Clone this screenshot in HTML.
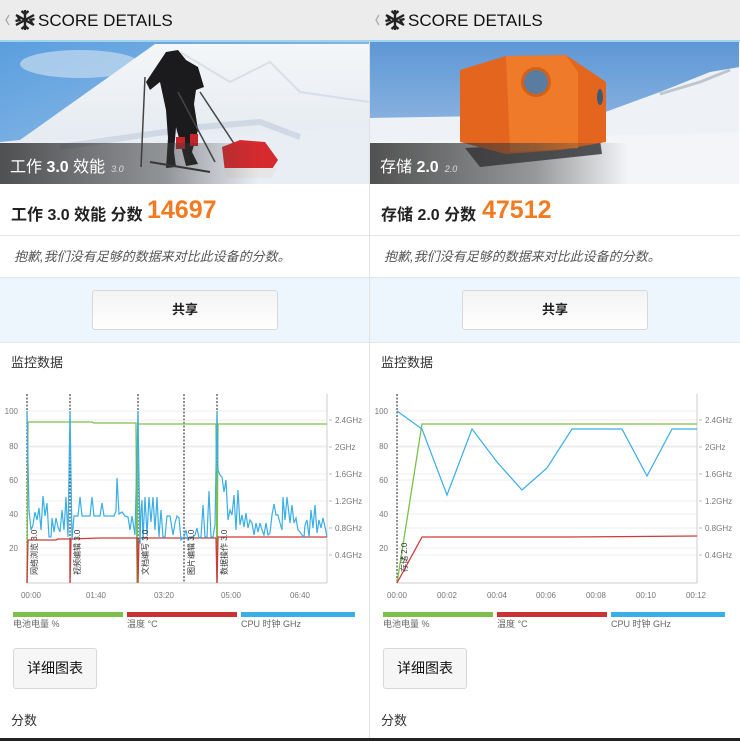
<!DOCTYPE html>
<html><head><meta charset="utf-8"><style>
*{margin:0;padding:0;box-sizing:border-box}
body{width:740px;height:741px;background:#fff;font-family:"Liberation Sans","Noto Sans CJK SC",sans-serif;position:relative;overflow:hidden}
.col{position:absolute;top:0;width:370px;height:741px;background:#fff}
.hdr{position:absolute;top:0;left:0;width:370px;height:41px;background:#ececec}
.hdr span{position:absolute;left:38px;top:11px;font-size:17px;color:#111}
.hline{position:absolute;top:40px;left:0;width:370px;height:2px;background:#9fd3ee}
.img{position:absolute;top:42px;left:0;width:369px;height:142px;overflow:hidden}
.ov{position:absolute;left:0;top:101px;width:369px;height:41px;background:linear-gradient(90deg,rgba(40,40,40,.8),rgba(60,60,60,.5) 45%,rgba(80,80,80,0) 70%)}
.ovt{position:absolute;left:10px;top:111px;color:#fff;font-size:16px}
.ovt small{font-size:9px;font-style:italic;margin-left:6px;color:#ddd}
.score{position:absolute;top:201px;left:11px;font-size:16px;font-weight:bold;color:#222}
.num{position:absolute;top:196px;left:147px;font-size:25px;font-weight:bold;color:#f47a20}
.l1{position:absolute;top:235px;left:0;width:370px;height:1px;background:#e4e4e4}
.sorry{position:absolute;top:246px;left:14px;font-size:13px;font-style:italic;color:#555}
.band{position:absolute;top:277px;left:0;width:370px;height:66px;background:#eef6fd;border-top:1px solid #dfe6ec;border-bottom:1px solid #dfe6ec}
.btn{position:absolute;top:290px;left:92px;width:186px;height:40px;border:1px solid #d8d8d8;border-radius:3px;background:linear-gradient(#f3f3f3,#fff);text-align:center;line-height:38px;font-size:13px;font-weight:bold;color:#222}
.mon{position:absolute;top:352px;left:11px;font-size:13px;color:#333}
.lg{position:absolute;top:612px;height:5px}
.lgt{position:absolute;top:617px;font-size:9px;color:#666}
.btn2{position:absolute;top:648px;left:13px;width:84px;height:41px;border:1px solid #d8d8d8;border-radius:3px;background:#f6f6f6;text-align:center;line-height:39px;font-size:14px;color:#111}
.fs{position:absolute;top:710px;left:11px;font-size:13px;color:#333}
.vsep{position:absolute;top:42px;left:369px;width:1px;height:699px;background:#e2e2e2}
.ax{font-family:"Liberation Sans",sans-serif;font-size:8px;fill:#777}
</style></head><body>

<!-- LEFT -->
<div class="col" style="left:0">
 <div class="hdr"><svg style="position:absolute;left:3px;top:9px" width="34" height="22" viewBox="0 0 34 22"><path d="M6 6 L3 11 L6 16" stroke="#aaa" stroke-width="1.3" fill="none"/><g stroke="#222" stroke-width="2.4" fill="none" transform="translate(22 11)"><path d="M0-10V10M-9-5L9 5M-9 5L9-5"/><path d="M-3.5-9L0-6L3.5-9M-3.5 9L0 6L3.5 9M-9.5 1L-5.5 0L-7.5-4.5M9.5-1L5.5 0L7.5 4.5"/></g></svg><span>SCORE DETAILS</span></div>
 <div class="hline"></div>
 <div class="img">
  <svg width="369" height="142">
   <defs><linearGradient id="sk" x1="0" y1="0" x2="1" y2="1"><stop offset="0" stop-color="#5a9ede"/><stop offset="1" stop-color="#a9cbea"/></linearGradient>
   <linearGradient id="sn" x1="0" y1="0" x2="0" y2="1"><stop offset="0" stop-color="#f4f6f8"/><stop offset="1" stop-color="#dfe6ee"/></linearGradient></defs>
   <rect width="369" height="142" fill="url(#sk)"/>
   <ellipse cx="80" cy="22" rx="60" ry="14" fill="#c6dcef" opacity=".7"/>
   <path d="M20 98 L155 2 L369 2 L369 142 L0 142 L0 100Z" fill="url(#sn)"/>
   <path d="M180 10 L230 40 L270 20 L300 50 L369 60" stroke="#c9d2db" stroke-width="2" fill="none" opacity=".6"/>
   <path d="M0 100 L369 85 L369 142 L0 142Z" fill="#e9eef5"/>
   <path d="M60 105 L200 85 L260 80 L300 95" stroke="#b7c4d6" stroke-width="6" fill="none" opacity=".5"/>
   <path d="M166 10 L178 8 L186 18 L198 25 L204 45 L196 48 L194 62 L198 88 L192 110 L198 122 L186 124 L180 100 L176 85 L174 110 L176 125 L166 126 L168 96 L166 68 L160 40 L150 48 L146 40 L158 22Z" fill="#1b1b1d"/>
   <rect x="176" y="95" width="9" height="12" fill="#c9232a"/>
   <rect x="190" y="92" width="8" height="12" fill="#c9232a"/>
   <path d="M145 35 L141 125 M200 50 L235 103 M178 50 L215 120" stroke="#444" stroke-width="1.5"/>
   <path d="M150 120 L210 130" stroke="#333" stroke-width="2"/>
   <path d="M222 105 L240 98 L265 100 L278 118 L270 130 L225 130 Z" fill="#d52a2e"/>
   <path d="M223 126 L277 126 L272 136 L228 136Z" fill="#e6e6e6"/>
  </svg>
  <div class="ov"></div>
  <div class="ovt">工作 <b>3.0</b> 效能<small>3.0</small></div>
 </div>
 <div class="score">工作 3.0 效能 分数</div>
 <div class="num">14697</div>
 <div class="l1"></div>
 <div class="sorry">抱歉,我们没有足够的数据来对比此设备的分数。</div>
 <div class="band"></div>
 <div class="btn">共享</div>
 <div class="mon">监控数据</div>
 <svg style="position:absolute;left:0;top:380px" width="370" height="230">
  <g stroke="#ececec" stroke-width="1">
   <line x1="27" x2="327" y1="31" y2="31"/><line x1="27" x2="327" y1="66" y2="66"/><line x1="27" x2="327" y1="100" y2="100"/><line x1="27" x2="327" y1="134" y2="134"/><line x1="27" x2="327" y1="168" y2="168"/>
   <line x1="27" x2="327" y1="40" y2="40"/><line x1="27" x2="327" y1="67" y2="67"/><line x1="27" x2="327" y1="94" y2="94"/><line x1="27" x2="327" y1="121" y2="121"/><line x1="27" x2="327" y1="148" y2="148"/><line x1="27" x2="327" y1="175" y2="175"/>
  </g>
  <line x1="27" x2="327" y1="203" y2="203" stroke="#ccc"/>
  <line x1="327" x2="327" y1="14" y2="203" stroke="#ccc"/>
  <g class="ax" text-anchor="end"><text x="18" y="34">100</text><text x="18" y="69">80</text><text x="18" y="103">60</text><text x="18" y="137">40</text><text x="18" y="171">20</text></g>
  <g class="ax"><text x="335" y="43">2.4GHz</text><text x="335" y="70">2GHz</text><text x="335" y="97">1.6GHz</text><text x="335" y="124">1.2GHz</text><text x="335" y="151">0.8GHz</text><text x="335" y="178">0.4GHz</text></g>
  <g stroke="#bbb"><line x1="329" x2="332" y1="40" y2="40"/><line x1="329" x2="332" y1="67" y2="67"/><line x1="329" x2="332" y1="94" y2="94"/><line x1="329" x2="332" y1="121" y2="121"/><line x1="329" x2="332" y1="148" y2="148"/><line x1="329" x2="332" y1="175" y2="175"/></g>
  <g class="ax" text-anchor="middle"><text x="31" y="218">00:00</text><text x="96" y="218">01:40</text><text x="164" y="218">03:20</text><text x="231" y="218">05:00</text><text x="300" y="218">06:40</text></g>
  <g stroke="#444" stroke-dasharray="2,1.5" stroke-width="1.2"><line x1="27" x2="27" y1="14" y2="203"/><line x1="70" x2="70" y1="14" y2="203"/><line x1="138" x2="138" y1="14" y2="203"/><line x1="184" x2="184" y1="14" y2="203"/><line x1="217" x2="217" y1="14" y2="203"/></g>
  <polyline fill="none" stroke="#7cc04a" stroke-width="1.3" points="27,203 28,42 70,42 92,42 94,43 136,43 137,203 138,44 216,44 217,203 218,44 327,44"/>
  <polyline fill="none" stroke="#d03a3a" stroke-width="1.3" points="27,203 28,160 56,160 58,159 70,159 70,203 71,159 100,158 137,158 138,203 139,158 216,158 217,203 218,157 327,157"/>
  <polyline fill="none" stroke="#3aaee6" stroke-width="1.2" points="27,31 29,130 31,150 33,145 35,132 37,140 39,128 41,150 43,116 45,136 47,123 49,157 51,157 52,138 54,152 56,138 58,147 60,152 62,130 64,150 66,117 68,157 70,31 72,160 74,136 76,136 78,136 80,117 82,136 90,136 92,117 94,136 100,136 102,123 104,136 114,136 116,131 117,98 119,134 122,132 125,136 128,137 130,150 132,136 135,155 138,31 140,164 141,130 142,120 143,160 145,117 147,155 149,117 151,142 153,117 155,150 157,117 159,157 161,130 163,157 165,157 167,136 170,136 173,155 175,143 177,136 179,138 181,160 184,157 186,150 188,160 190,157 193,157 195,155 197,148 199,158 201,157 203,125 205,157 207,157 209,111 211,157 213,157 215,145 217,31 218,90 220,95 222,97 224,112 226,100 228,140 230,130 232,135 234,115 236,150 238,110 240,145 242,135 244,147 246,133 248,148 250,140 252,143 254,155 256,143 258,152 260,143 262,150 264,155 266,143 268,155 270,153 272,135 274,124 276,135 278,135 280,143 282,150 283,117 285,140 287,117 290,143 292,125 294,143 296,138 298,150 300,152 302,155 304,157 305,145 307,140 309,157 311,130 313,148 315,125 317,153 319,140 321,148 323,138 325,147 327,157"/>
  <g font-size="8" fill="#333" font-family="Liberation Sans,Noto Sans CJK SC,sans-serif">
   <text transform="translate(37 195) rotate(-90)">网络浏览 3.0</text>
   <text transform="translate(80 195) rotate(-90)">视频编辑 3.0</text>
   <text transform="translate(148 195) rotate(-90)">文档编写 3.0</text>
   <text transform="translate(194 195) rotate(-90)">图片编辑 3.0</text>
   <text transform="translate(227 195) rotate(-90)">数据操作 3.0</text>
  </g>
 </svg>
 <div class="lg" style="left:13px;width:110px;background:#7cc04a"></div>
 <div class="lg" style="left:127px;width:110px;background:#c93333"></div>
 <div class="lg" style="left:241px;width:114px;background:#3aaee6"></div>
 <div class="lgt" style="left:13px">电池电量 %</div>
 <div class="lgt" style="left:127px">温度 °C</div>
 <div class="lgt" style="left:241px">CPU 时钟 GHz</div>
 <div class="btn2">详细图表</div>
 <div class="fs">分数</div>
</div>

<!-- RIGHT -->
<div class="col" style="left:370px">
 <div class="hdr"><svg style="position:absolute;left:3px;top:9px" width="34" height="22" viewBox="0 0 34 22"><path d="M6 6 L3 11 L6 16" stroke="#aaa" stroke-width="1.3" fill="none"/><g stroke="#222" stroke-width="2.4" fill="none" transform="translate(22 11)"><path d="M0-10V10M-9-5L9 5M-9 5L9-5"/><path d="M-3.5-9L0-6L3.5-9M-3.5 9L0 6L3.5 9M-9.5 1L-5.5 0L-7.5-4.5M9.5-1L5.5 0L7.5 4.5"/></g></svg><span>SCORE DETAILS</span></div>
 <div class="hline"></div>
 <div class="img">
  <svg width="370" height="142">
   <defs><linearGradient id="sk2" x1="0" y1="0" x2="0" y2="1"><stop offset="0" stop-color="#5e97d6"/><stop offset="1" stop-color="#a8c6e6"/></linearGradient></defs>
   <rect width="370" height="142" fill="url(#sk2)"/>
   <path d="M0 76 L230 72 L290 50 L340 30 L370 25 L370 142 L0 142Z" fill="#eef1f5"/>
   <path d="M290 52 L330 40 L360 28" stroke="#aab3bf" stroke-width="3" fill="none" opacity=".7"/>
   <path d="M0 100 L370 90 L370 142 L0 142Z" fill="#f3f5f8"/>
   <path d="M95 106 L230 98 L232 112 L110 125Z" fill="#55565a"/>
   <path d="M90 28 L136 14 L196 13 L236 40 L236 100 L190 108 L136 112 L90 100Z" fill="#e3651e"/>
   <path d="M136 14 L196 13 L208 30 L208 106 L140 110Z" fill="#ee7a2a"/>
   <circle cx="166" cy="40" r="15" fill="#d56018"/><circle cx="166" cy="40" r="12" fill="#5a7ca0"/>
   <ellipse cx="230" cy="55" rx="3" ry="8" fill="#3e5a78"/>
  </svg>
  <div class="ov"></div>
  <div class="ovt">存储 <b>2.0</b><small>2.0</small></div>
 </div>
 <div class="score">存储 2.0 分数</div>
 <div class="num" style="left:112px">47512</div>
 <div class="l1"></div>
 <div class="sorry">抱歉,我们没有足够的数据来对比此设备的分数。</div>
 <div class="band"></div>
 <div class="btn">共享</div>
 <div class="mon">监控数据</div>
 <svg style="position:absolute;left:0;top:380px" width="370" height="230">
  <g stroke="#ececec" stroke-width="1">
   <line x1="27" x2="327" y1="31" y2="31"/><line x1="27" x2="327" y1="66" y2="66"/><line x1="27" x2="327" y1="100" y2="100"/><line x1="27" x2="327" y1="134" y2="134"/><line x1="27" x2="327" y1="168" y2="168"/>
   <line x1="27" x2="327" y1="40" y2="40"/><line x1="27" x2="327" y1="67" y2="67"/><line x1="27" x2="327" y1="94" y2="94"/><line x1="27" x2="327" y1="121" y2="121"/><line x1="27" x2="327" y1="148" y2="148"/><line x1="27" x2="327" y1="175" y2="175"/>
  </g>
  <line x1="27" x2="327" y1="203" y2="203" stroke="#ccc"/>
  <line x1="327" x2="327" y1="14" y2="203" stroke="#ccc"/>
  <g class="ax" text-anchor="end"><text x="18" y="34">100</text><text x="18" y="69">80</text><text x="18" y="103">60</text><text x="18" y="137">40</text><text x="18" y="171">20</text></g>
  <g class="ax"><text x="335" y="43">2.4GHz</text><text x="335" y="70">2GHz</text><text x="335" y="97">1.6GHz</text><text x="335" y="124">1.2GHz</text><text x="335" y="151">0.8GHz</text><text x="335" y="178">0.4GHz</text></g>
  <g stroke="#bbb"><line x1="329" x2="332" y1="40" y2="40"/><line x1="329" x2="332" y1="67" y2="67"/><line x1="329" x2="332" y1="94" y2="94"/><line x1="329" x2="332" y1="121" y2="121"/><line x1="329" x2="332" y1="148" y2="148"/><line x1="329" x2="332" y1="175" y2="175"/></g>
  <g class="ax" text-anchor="middle"><text x="27" y="218">00:00</text><text x="77" y="218">00:02</text><text x="127" y="218">00:04</text><text x="176" y="218">00:06</text><text x="226" y="218">00:08</text><text x="276" y="218">00:10</text><text x="326" y="218">00:12</text></g>
  <line x1="27" x2="27" y1="14" y2="203" stroke="#444" stroke-dasharray="2,1.5" stroke-width="1.2"/>
  <polyline fill="none" stroke="#7cc04a" stroke-width="1.3" points="27,203 52,44 327,44"/>
  <polyline fill="none" stroke="#d03a3a" stroke-width="1.3" points="27,203 52,157 200,157 327,156"/>
  <polyline fill="none" stroke="#3aaee6" stroke-width="1.2" points="27,31 52,49 77,115 102,49 127,82 152,110 177,88 202,49 252,49 277,96 302,49 327,49"/>
  <text transform="translate(37 192) rotate(-90)" font-size="8" fill="#333" font-family="Liberation Sans,Noto Sans CJK SC,sans-serif">存储 2.0</text>
 </svg>
 <div class="lg" style="left:13px;width:110px;background:#7cc04a"></div>
 <div class="lg" style="left:127px;width:110px;background:#c93333"></div>
 <div class="lg" style="left:241px;width:114px;background:#3aaee6"></div>
 <div class="lgt" style="left:13px">电池电量 %</div>
 <div class="lgt" style="left:127px">温度 °C</div>
 <div class="lgt" style="left:241px">CPU 时钟 GHz</div>
 <div class="btn2">详细图表</div>
 <div class="fs">分数</div>
</div>
<div class="vsep"></div>
<div style="position:absolute;left:0;top:738px;width:740px;height:3px;background:#222"></div>
</body></html>
